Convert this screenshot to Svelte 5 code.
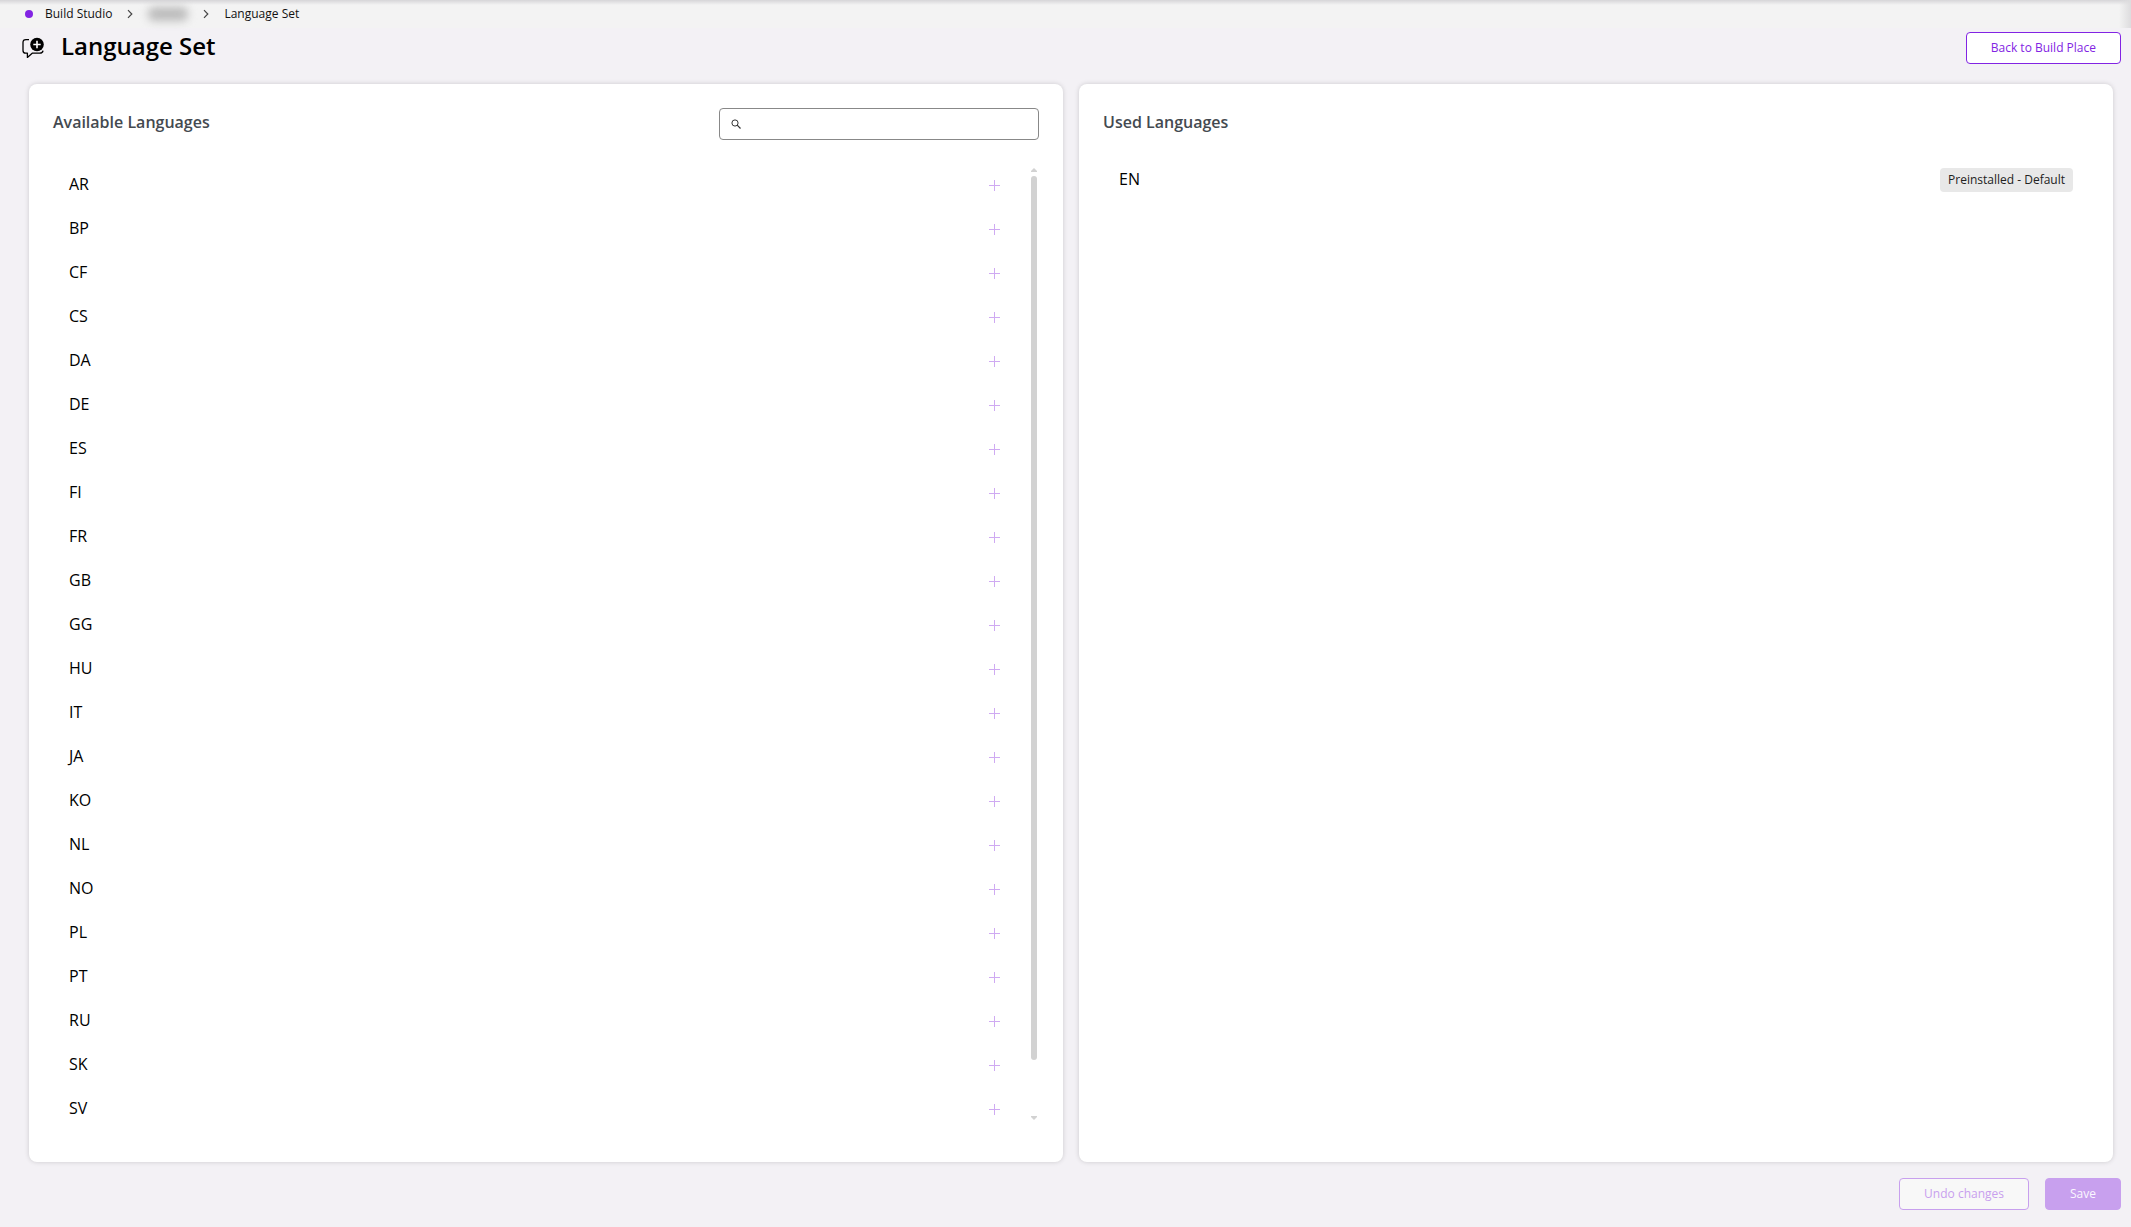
<script>
  const available = [
    'AR', 'BP', 'CF', 'CS', 'DA', 'DE', 'ES', 'FI', 'FR', 'GB', 'GG',
    'HU', 'IT', 'JA', 'KO', 'NL', 'NO', 'PL', 'PT', 'RU', 'SK', 'SV',
  ];

  let used = $state([{ code: 'EN', preinstalled: true }]);
  let search = $state('');

  let shown = $derived(
    available.filter(
      (code) => code.includes(search.trim().toUpperCase()) && !used.some((lang) => lang.code === code)
    )
  );
  let changed = $derived(used.length > 1);

  function add(code) {
    used.push({ code, preinstalled: false });
  }

  function undo() {
    used = used.filter((lang) => lang.preinstalled);
  }
</script>

{#snippet chevron()}
  <svg class="chevron" width="6" height="10" viewBox="0 0 6 10" aria-hidden="true">
    <path d="M1 1.2 4.8 5 1 8.8" fill="none" stroke="#444" stroke-width="1.2" />
  </svg>
{/snippet}

<div class="page">
  <nav class="crumbs" aria-label="Breadcrumb">
    <span class="dot"></span>
    <a href="#studio">Build Studio</a>
    {@render chevron()}
    <span class="redacted"></span>
    {@render chevron()}
    <a href="#languages">Language Set</a>
  </nav>

  <header>
    <svg class="logo" width="24" height="24" viewBox="0 0 24 24" aria-hidden="true">
      <path
        d="M9 3.6H6Q3 3.6 3 6.4V14.4Q3 17.2 5.6 17.2H7.4V21.4L12.2 17.2H19.8Q22.6 17.2 23 14.6"
        fill="none"
        stroke="#000"
        stroke-width="1.3"
        stroke-linejoin="round"
      />
      <circle cx="17" cy="8.5" r="6.8" />
      <path d="M17 4.8v7.4M13.3 8.5h7.4" stroke="#fff" stroke-width="1.6" />
    </svg>
    <h1>Language Set</h1>
    <button class="btn outline" type="button">Back to Build Place</button>
  </header>

  <main>
    <section class="panel">
      <div class="panel-head">
        <h2>Available Languages</h2>
        <label class="search">
          <svg width="10" height="10" viewBox="0 0 10 10" aria-hidden="true">
            <circle cx="4" cy="4" r="3.1" fill="none" stroke="#333" />
            <path d="M6.2 6.2 9.5 9.5" stroke="#333" stroke-width="1.2" />
          </svg>
          <input type="text" aria-label="Search languages" bind:value={search} />
        </label>
      </div>
      <div class="scroller">
        <ul class="available">
          {#each shown as code (code)}
            <li>
              <span>{code}</span>
              <button class="add" type="button" aria-label="Add {code}" onclick={() => add(code)}>
                <svg width="11" height="11" viewBox="0 0 11 11" aria-hidden="true">
                  <path d="M5.5 0v11M0 5.5h11" stroke="#cfaaf2" />
                </svg>
              </button>
            </li>
          {/each}
        </ul>
        <div class="scrollbar" aria-hidden="true">
          <svg width="6" height="4" viewBox="0 0 6 4"><path d="M3 0 6 3V4H0V3z" fill="#d2d2d2" /></svg>
          <div class="track"><div class="thumb"></div></div>
          <svg width="6" height="4" viewBox="0 0 6 4"><path d="M3 4 6 1V0H0V1z" fill="#d2d2d2" /></svg>
        </div>
      </div>
    </section>

    <section class="panel">
      <div class="panel-head">
        <h2>Used Languages</h2>
      </div>
      <ul class="used">
        {#each used as lang (lang.code)}
          <li>
            <span>{lang.code}</span>
            {#if lang.preinstalled}
              <span class="badge">Preinstalled - Default</span>
            {/if}
          </li>
        {/each}
      </ul>
    </section>
  </main>

  <footer>
    <button class="btn outline" type="button" disabled={!changed} onclick={undo}>Undo changes</button>
    <button class="btn solid" type="button" disabled={!changed}>Save</button>
  </footer>
</div>

<style>
  :global(body) {
    background: #f3f1f5;
  }

  .page {
    box-sizing: border-box;
    min-height: 100vh;
    display: flex;
    flex-direction: column;
    font-family: 'Open Sans', sans-serif;
    font-size: 16px;
    color: #000;
  }

  .crumbs {
    box-sizing: border-box;
    height: 28px;
    padding: 0 0 1px 25px;
    display: flex;
    align-items: center;
    font-size: 12px;
    background:
      linear-gradient(to left, #dddcde, transparent) right / 12px 100% no-repeat,
      linear-gradient(#d6d5d8, #f3f3f3 5px);
  }
  .crumbs a {
    color: #111;
    text-decoration: none;
  }
  .dot {
    width: 8px;
    height: 8px;
    margin-right: 12px;
    border-radius: 50%;
    background: #8224e3;
  }
  .chevron {
    margin: 0 15px;
  }
  .redacted {
    width: 40px;
    height: 14px;
    border-radius: 6px;
    background: #bcbcbc;
    filter: blur(4px);
  }

  header {
    display: flex;
    align-items: flex-start;
    padding: 4px 10px 20px 20px;
  }
  .logo {
    align-self: center;
  }
  h1 {
    flex: 1;
    margin: 0 0 0 17px;
    font-size: 24px;
    line-height: 28px;
    font-weight: 600;
  }

  .btn {
    height: 32px;
    padding: 0 24px 2px;
    border: 1px solid #8224e3;
    border-radius: 4px;
    font: 12px 'Open Sans', sans-serif;
  }
  .outline {
    background: #fff;
    color: #8224e3;
  }
  .outline:disabled {
    background: #f8f8f8;
    border-color: #c8a0ee;
    color: #c8a0ee;
  }
  .solid {
    background: #8224e3;
    color: #fff;
  }
  .solid:disabled {
    background: #c8a0ee;
    border-color: #c8a0ee;
    color: #fbf7ff;
  }

  main {
    flex: 1;
    display: grid;
    grid-template-columns: 1fr 1fr;
    gap: 16px;
    padding: 0 18px 0 29px;
  }
  .panel {
    padding: 24px;
    border-radius: 8px;
    background: #fff;
    box-shadow: 0 0 5px rgba(0, 0, 0, 0.16);
  }
  .panel-head {
    display: flex;
    justify-content: space-between;
    height: 32px;
    margin-bottom: 28px;
  }
  h2 {
    margin: 0;
    font-size: 16px;
    line-height: 28px;
    font-weight: 600;
    color: #444a50;
  }
  .search {
    box-sizing: border-box;
    width: 320px;
    display: flex;
    align-items: center;
    gap: 8px;
    padding: 0 11px;
    border: 1px solid #888;
    border-radius: 4px;
  }
  .search input {
    flex: 1;
    min-width: 0;
    border: 0;
    outline: 0;
    background: none;
    font: 12px 'Open Sans', sans-serif;
  }

  ul {
    margin: 0;
    padding: 0;
    list-style: none;
  }
  li {
    display: flex;
    align-items: center;
    justify-content: space-between;
  }
  .scroller {
    display: flex;
    justify-content: space-between;
  }
  .available {
    flex: 1;
    display: grid;
    gap: 12px;
    align-content: start;
    padding: 0 31px 0 16px;
  }
  .available li {
    height: 32px;
  }
  .add {
    display: flex;
    margin-top: 2px;
    padding: 0;
    border: 0;
    background: none;
    cursor: pointer;
  }
  .scrollbar {
    display: flex;
    flex-direction: column;
    gap: 4px;
    width: 6px;
    margin: 0 2px 4px 0;
  }
  .track {
    flex: 1;
    display: grid;
    grid-template-rows: 17fr 1fr;
  }
  .thumb {
    border-radius: 3px;
    background: #d2d2d2;
  }

  .used {
    padding: 0 16px;
  }
  .used li {
    height: 24px;
    line-height: 22px;
    align-items: flex-start;
  }
  .badge {
    padding: 0 8px;
    border-radius: 4px;
    background: #e8e8e8;
    color: #222;
    font-size: 12px;
    line-height: 24px;
  }

  footer {
    display: flex;
    justify-content: flex-end;
    gap: 16px;
    padding: 16px 10px 17px;
  }
</style>
